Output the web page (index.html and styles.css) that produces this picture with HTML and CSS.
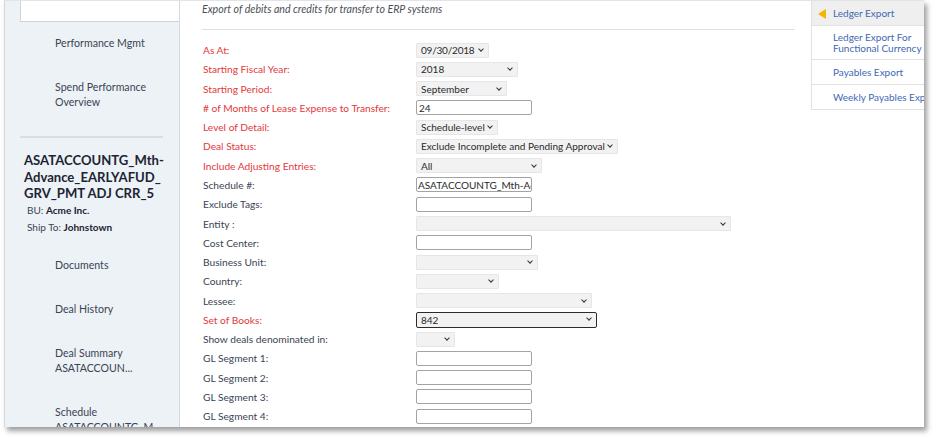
FILE: index.html
```html
<!DOCTYPE html>
<html>
<head>
<meta charset="utf-8">
<link rel="stylesheet" href="styles.css">
</head>
<body>
<div class="window">
  <aside class="sidebar">
    <div class="card-end"></div>
    <nav class="nav nav-top">
      <div class="nav-item">Performance Mgmt</div>
      <div class="nav-item">Spend Performance<br>Overview</div>
    </nav>
    <div class="sep"></div>
    <div class="deal">
      <div class="deal-title">ASATACCOUNTG_Mth-<br>Advance_EARLYAFUD_<br>GRV_PMT ADJ CRR_5</div>
      <div class="deal-meta">BU: <b>Acme Inc.</b></div>
      <div class="deal-meta">Ship To: <b>Johnstown</b></div>
    </div>
    <nav class="nav nav-bottom">
      <div class="nav-item">Documents</div>
      <div class="nav-item">Deal History</div>
      <div class="nav-item">Deal Summary<br>ASATACCOUN...</div>
      <div class="nav-item">Schedule<br>ASATACCOUNTG_M...</div>
    </nav>
  </aside>

  <main class="main">
    <div class="subtitle">Export of debits and credits for transfer to ERP systems</div>
    <div class="rule"></div>
    <div class="form">
      <div class="lbl req">As At:</div>
      <div class="ctl"><span class="sel w73">09/30/2018<i class="chev"></i></span></div>

      <div class="lbl req">Starting Fiscal Year:</div>
      <div class="ctl"><span class="sel w102">2018<i class="chev"></i></span></div>

      <div class="lbl req">Starting Period:</div>
      <div class="ctl"><span class="sel w91">September<i class="chev"></i></span></div>

      <div class="lbl req"># of Months of Lease Expense to Transfer:</div>
      <div class="ctl"><span class="inp">24</span></div>

      <div class="lbl req">Level of Detail:</div>
      <div class="ctl"><span class="sel w82">Schedule-level<i class="chev"></i></span></div>

      <div class="lbl req">Deal Status:</div>
      <div class="ctl"><span class="sel w202">Exclude Incomplete and Pending Approval<i class="chev"></i></span></div>

      <div class="lbl req">Include Adjusting Entries:</div>
      <div class="ctl"><span class="sel w126">All<i class="chev"></i></span></div>

      <div class="lbl">Schedule #:</div>
      <div class="ctl"><span class="inp clip">ASATACCOUNTG_Mth-Advance</span></div>

      <div class="lbl">Exclude Tags:</div>
      <div class="ctl"><span class="inp"></span></div>

      <div class="lbl">Entity :</div>
      <div class="ctl"><span class="sel w315"><i class="chev"></i></span></div>

      <div class="lbl">Cost Center:</div>
      <div class="ctl"><span class="inp"></span></div>

      <div class="lbl">Business Unit:</div>
      <div class="ctl"><span class="sel w122"><i class="chev"></i></span></div>

      <div class="lbl">Country:</div>
      <div class="ctl"><span class="sel w83"><i class="chev"></i></span></div>

      <div class="lbl">Lessee:</div>
      <div class="ctl"><span class="sel w176"><i class="chev"></i></span></div>

      <div class="lbl req">Set of Books:</div>
      <div class="ctl"><span class="sel w181 focus">842<i class="chev"></i></span></div>

      <div class="lbl">Show deals denominated in:</div>
      <div class="ctl"><span class="sel w39"><i class="chev"></i></span></div>

      <div class="lbl">GL Segment 1:</div>
      <div class="ctl"><span class="inp"></span></div>

      <div class="lbl">GL Segment 2:</div>
      <div class="ctl"><span class="inp"></span></div>

      <div class="lbl">GL Segment 3:</div>
      <div class="ctl"><span class="inp"></span></div>

      <div class="lbl">GL Segment 4:</div>
      <div class="ctl"><span class="inp"></span></div>
    </div>
  </main>

  <aside class="side-menu">
    <div class="menu-item active"><i class="tri"></i>Ledger Export</div>
    <div class="menu-item two">Ledger Export For<br>Functional Currency</div>
    <div class="menu-item">Payables Export</div>
    <div class="menu-item">Weekly Payables Export</div>
  </aside>
</div>
</body>
</html>
```

FILE: styles.css
```css
* { box-sizing: border-box; }

html, body {
  margin: 0;
  padding: 0;
  background: #ffffff;
}

body {
  font-family: Lato, "Open Sans", "Liberation Sans", sans-serif;
  font-size: 10.5px;
  color: #3a4453;
  width: 936px;
  height: 439px;
  overflow: hidden;
}

.window {
  margin-left: 4px;
  width: 920px;
  height: 427px;
  display: flex;
  border-left: 1px solid #d4d7db;
  border-top: 1px solid #e2e4e7;
  background: #fff;
  box-shadow: 3px 4px 5px rgba(0, 0, 0, 0.38);
  overflow: hidden;
}

/* ---------- left sidebar ---------- */
.sidebar {
  width: 175px;
  flex: none;
  background: #edf2f6;
  border-right: 1px solid #d6dade;
  display: flex;
  flex-direction: column;
  overflow: hidden;
}

.card-end {
  height: 21px;
  margin-left: 15px;
  background: #fff;
  border-left: 1px solid #cfd4da;
  border-bottom: 1px solid #cfd4da;
  flex: none;
}

.nav {
  display: flex;
  flex-direction: column;
  padding-left: 50px;
  line-height: 15px;
  font-size: 10.6px;
  color: #3a4453;
  flex: none;
  white-space: nowrap;
}

.nav-top { margin-top: 14px; gap: 29px; }
.nav-bottom { margin-top: 22px; gap: 29px; }

.sep {
  height: 2px;
  background: #d9dee3;
  margin: 26px 16px 0 15px;
  flex: none;
}

.deal {
  padding-left: 19px;
  margin-top: 14px;
  flex: none;
}

.deal-title {
  font-size: 13.1px;
  font-weight: 700;
  line-height: 16.5px;
  color: #1d2433;
}

.deal-meta {
  padding-left: 3px;
  line-height: 17px;
  font-size: 10px;
  color: #3a4453;
}

.deal-meta b {
  font-weight: 700;
  color: #1d2433;
}

/* ---------- main ---------- */
.main {
  width: 631px;
  flex: none;
  padding-left: 22px;
  padding-right: 16px;
}

.subtitle {
  font-style: italic;
  font-size: 10.6px;
  line-height: 14px;
  margin-top: 1px;
  color: #4a4f57;
}

.rule {
  height: 1px;
  background: #dcdfe3;
  margin-top: 13px;
}

.form {
  display: grid;
  grid-template-columns: 214px 1fr;
  grid-auto-rows: 19.27px;
  margin-top: 10.5px;
}

.lbl {
  display: flex;
  align-items: center;
  padding-left: 1px;
  font-size: 10.2px;
  white-space: nowrap;
  color: #3a4453;
}

.lbl.req { color: #e5383b; }

.ctl {
  display: flex;
  align-items: center;
}

.sel {
  position: relative;
  display: inline-flex;
  align-items: center;
  height: 15px;
  padding-left: 4px;
  background: #f2f2f2;
  border: 1px solid #e6e6e6;
  border-radius: 1px;
  font-size: 10px;
  color: #2a2a2a;
  white-space: nowrap;
}

.sel .chev {
  position: absolute;
  right: 5px;
  top: 3.5px;
  width: 4px;
  height: 4px;
  border-right: 1.2px solid #333;
  border-bottom: 1.2px solid #333;
  transform: rotate(45deg);
}

.w73 { letter-spacing: -0.2px; }

.sel.focus {
  border: 1px solid #2b2b2b;
  border-radius: 2px;
  height: 16px;
}

.w39 { width: 39px; }
.w73 { width: 73px; }
.w82 { width: 82px; }
.w83 { width: 83px; }
.w91 { width: 91px; }
.w102 { width: 102px; }
.w122 { width: 122px; }
.w126 { width: 126px; }
.w176 { width: 176px; }
.w181 { width: 181px; }
.w202 { width: 202px; }
.w315 { width: 315px; }

.inp {
  display: inline-flex;
  align-items: center;
  width: 116px;
  height: 15px;
  padding-left: 2px;
  background: #fff;
  border: 1px solid #a3a3a3;
  border-radius: 2px;
  font-size: 10px;
  color: #2a2a2a;
  white-space: nowrap;
  overflow: hidden;
}

.inp.clip { padding-left: 1px; }

/* ---------- right menu ---------- */
.side-menu {
  width: 113px;
  flex: none;
  align-self: flex-start;
  border-left: 1px solid #e2e2e2;
  overflow: hidden;
}

.menu-item {
  display: flex;
  align-items: center;
  height: 25px;
  padding-left: 21px;
  border-bottom: 1px solid #e2e2e2;
  font-size: 10px;
  color: #3d69b4;
  white-space: nowrap;
  position: relative;
}

.menu-item.active {
  background: #efefef;
}

.menu-item.two {
  height: 34px;
  line-height: 10.5px;
}

.tri {
  position: absolute;
  left: 6px;
  top: 8px;
  width: 0;
  height: 0;
  border-top: 5px solid transparent;
  border-bottom: 5px solid transparent;
  border-right: 8px solid #f4b400;
}
```
